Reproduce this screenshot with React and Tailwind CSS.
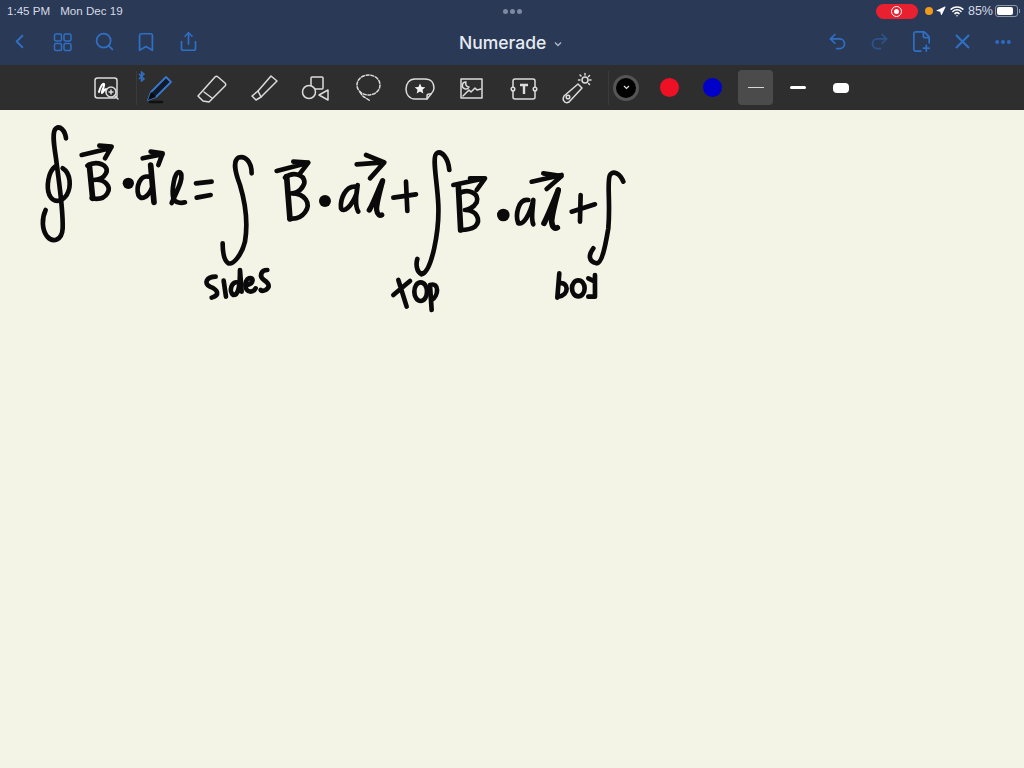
import { ChevronLeft, Search, Bookmark, Share, Undo2, Redo2, FilePlus2, Ellipsis, Navigation, Wifi } from 'lucide-react'

function GridIcon() {
  return (
    <svg width="20" height="20" viewBox="0 0 20 20" fill="none" stroke="currentColor" strokeWidth="1.5">
      <rect x="1.5" y="2" width="7" height="7" rx="1.5" />
      <rect x="11" y="2" width="7" height="7" rx="1.5" />
      <rect x="1.5" y="11.5" width="7" height="7" rx="1.5" />
      <rect x="11" y="11.5" width="7" height="7" rx="1.5" />
    </svg>
  )
}

function StatusBar() {
  return (
    <div className="h-[22px] flex items-center relative text-[11.6px] text-[#d5dbe6] pl-[7px] pr-[4px]">
      <span>1:45 PM</span>
      <span className="ml-[10px]">Mon Dec 19</span>
      <div className="absolute left-[503px] top-[9px] flex gap-[2px]">
        <span className="w-[5px] h-[5px] rounded-full bg-[#7e8aa3]" />
        <span className="w-[5px] h-[5px] rounded-full bg-[#7e8aa3]" />
        <span className="w-[5px] h-[5px] rounded-full bg-[#7e8aa3]" />
      </div>
      <div className="ml-auto flex items-center">
        <div className="w-[42px] h-[15px] rounded-full bg-[#e8202f] flex items-center justify-center">
          <span className="w-[11px] h-[11px] rounded-full border border-white flex items-center justify-center">
            <span className="w-[5px] h-[5px] rounded-full bg-white" />
          </span>
        </div>
        <span className="ml-[7px] w-[8px] h-[8px] rounded-full bg-[#f09a1a]" />
        <Navigation size={10} className="ml-[3px] text-white" fill="currentColor" />
        <Wifi size={14} className="ml-[4px] text-white" strokeWidth={2.6} />
        <span className="ml-[4px] text-[12.5px]">85%</span>
        <div className="ml-[2px] w-[23px] h-[12px] rounded-[3px] border border-[#8d97a8] p-[1px]">
          <div className="h-full w-[85%] rounded-[2px] bg-white" />
        </div>
        <span className="ml-[1px] w-[1px] h-[4px] bg-[#8d97a8]" />
      </div>
    </div>
  )
}

function NavBar() {
  return (
    <div className="h-[43px] pb-[4px] flex items-center text-[#2f6fc4] relative">
      <div className="flex items-center pl-[8px]">
        <ChevronLeft size={23} strokeWidth={2} />
        <div className="ml-[22px]"><GridIcon /></div>
        <Search size={21} strokeWidth={2} className="ml-[21px]" />
        <Bookmark size={22} strokeWidth={1.9} className="ml-[20px]" />
        <Share size={21} strokeWidth={1.9} className="ml-[21px]" />
      </div>
      <div className="absolute left-[459px] top-[8px] flex items-center text-[#e6ebf3] text-[17.5px] font-medium font-['Inter',sans-serif]">
        Numerade
        <svg className="ml-[8px] mt-[2px]" width="8" height="6" viewBox="0 0 8 6" fill="none" stroke="#aeb8c8" strokeWidth="1.4">
          <path d="M1 1.5l3 3 3-3" />
        </svg>
      </div>
      <div className="ml-auto flex items-center pr-[11px]">
        <Undo2 size={21} strokeWidth={2} />
        <Redo2 size={21} strokeWidth={2} className="ml-[21px] opacity-50" />
        <FilePlus2 size={23} strokeWidth={1.8} className="ml-[20px]" />
        <svg className="ml-[21px]" width="17" height="17" viewBox="0 0 17 17" fill="none" stroke="currentColor" strokeWidth="2.2">
          <path d="M2 2l13 13M15 2L2 15" />
        </svg>
        <Ellipsis size={20} strokeWidth={2.6} className="ml-[22px]" />
      </div>
    </div>
  )
}

function ToolIcon({ children }) {
  return (
    <svg width="34" height="34" viewBox="0 0 34 34" fill="none" stroke="#dcdcdc" strokeWidth="1.5" strokeLinejoin="round" strokeLinecap="round">
      {children}
    </svg>
  )
}

const tools = [
  // eraser
  <ToolIcon key="eraser">
    <path d="M20 6c1-1 2-1 3 0l7 6c1 1 1 2 0 3L14 31l-6-1-5-5z" />
    <path d="M9 21l8 6" />
  </ToolIcon>,
  // highlighter
  <ToolIcon key="highlighter">
    <path d="M24 5l6 5-16 16-3-6z" />
    <path d="M11 20l-6 5 4 4 5-3" />
  </ToolIcon>,
  // shapes
  <ToolIcon key="shapes">
    <rect x="12" y="6" width="12" height="12" rx="1" />
    <circle cx="10" cy="21" r="6.5" fill="#2e2e2e" />
    <path d="M29 19v10l-9-5z" />
  </ToolIcon>,
  // lasso
  <ToolIcon key="lasso">
    <g strokeDasharray="3 1.8">
      <ellipse cx="17.5" cy="14" rx="11.5" ry="10" />
      <path d="M9 21c3 6 7 6 10 9" />
    </g>
  </ToolIcon>,
  // sticker
  <ToolIcon key="sticker">
    <path d="M12 8h10c6 0 9 4 9 9 0 3-1 4-3 6l-4 5H12C6 28 3 23 3 18S6 8 12 8z" />
    <path d="M24 28v-3c0-1 1-2 2-2h2" />
    <path d="M17 12.5l1.6 3.4 3.7.4-2.8 2.5.8 3.7-3.3-1.9-3.3 1.9.8-3.7-2.8-2.5 3.7-.4z" fill="#f4f4f4" stroke="none" />
  </ToolIcon>,
  // image
  <ToolIcon key="image">
    <rect x="6" y="8" width="21" height="19" />
    <path d="M8 25l6-6 2 2 4-4 2 2 4-1" />
    <path d="M11 11a3.5 3.5 0 1 0 3 5 3.5 3.5 0 0 1-3-5z" />
  </ToolIcon>,
  // text box
  <ToolIcon key="text">
    <rect x="6" y="8" width="22" height="20" rx="2" />
    <circle cx="6" cy="18" r="1.8" fill="#2e2e2e" />
    <circle cx="28" cy="18" r="1.8" fill="#2e2e2e" />
    <path d="M13 14h8M17 14v9" strokeWidth="2.4" strokeLinecap="butt" />
  </ToolIcon>,
  // laser pointer
  <ToolIcon key="laser">
    <path d="M5 25L19 13l4 4-13 14c-2 1-4 1-5-1-1-1-1-3 0-5z" />
    <circle cx="9" cy="26" r="1.8" />
    <circle cx="26" cy="9" r="3" />
    <path d="M26 2.5v1.5M32 9h-1.5M21 4l1 1M30.5 4.5l-1 1M30.5 13.5l-1-1M19.5 9H21" />
  </ToolIcon>,
]

function Toolbar() {
  return (
    <div className="h-[45px] bg-[#2e2e2e] flex items-center pl-[89px]">
      <ToolIcon>
        <rect x="6" y="7" width="22" height="20" rx="2.5" />
        <path d="M10 21c1-5 4-9 5-8 1 2-3 8-2 9 1 0 2-4 4-4 1 0 0 3 1 3" stroke="#fff" strokeWidth="2" />
        <circle cx="22" cy="21" r="5" fill="#2e2e2e" />
        <path d="M20 21h4M22 19v4M26 25l3 3" />
      </ToolIcon>
      <div className="ml-[13px] w-px h-[34px] bg-[#3a3a3a]" />
      <div className="ml-[5px] w-[34px] h-[34px] relative">
        <svg width="34" height="34" viewBox="0 0 34 34" fill="none">
          <path d="M8 31h12" stroke="#111" strokeWidth="2.5" strokeLinecap="round" />
          <path d="M6 29l3-8 15-15 5 5-15 15z" fill="#111a2b" stroke="#3a78c8" strokeWidth="1.8" strokeLinejoin="round" />
          <path d="M6 29l3-8 5 5z" fill="#0b0b0b" />
        </svg>
        <svg className="absolute left-[-4px] top-0" width="8" height="11" viewBox="0 0 8 11" fill="none" stroke="#2f6fc4" strokeWidth="1.5">
          <path d="M1 3l5 5-2.5 2V1L6 3 1 8" />
        </svg>
      </div>
      <div className="ml-[19px] flex gap-[18px]">
        {tools}
      </div>
      <div className="ml-[15px] w-px h-[34px] bg-[#3a3a3a]" />
      <div className="ml-[4px] w-[26px] h-[26px] rounded-full bg-black border-[3px] border-[#555] flex items-center justify-center">
        <svg width="7" height="5" viewBox="0 0 7 5" fill="none" stroke="#ddd" strokeWidth="1.2"><path d="M1 1l2.5 2.5L6 1" /></svg>
      </div>
      <span className="ml-[21px] w-[19px] h-[19px] rounded-full bg-[#ee1125]" />
      <span className="ml-[24px] w-[19px] h-[19px] rounded-full bg-[#0000c8]" />
      <div className="ml-[16px] w-[35px] h-[35px] rounded-[4px] bg-[#4b4b4b] flex items-center justify-center">
        <span className="w-[16px] h-[1.5px] bg-[#d8d8d8]" />
      </div>
      <span className="ml-[17px] w-[16px] h-[3px] rounded-full bg-white" />
      <span className="ml-[27px] w-[16px] h-[10px] rounded-[4px] bg-white" />
    </div>
  )
}

// handwritten ink, stroke coordinates measured on a 3x crop of the page
function Ink() {
  return (
    <svg className="block" width="1024" height="658" viewBox="0 110 1024 658" fill="none" stroke="#0a0a0a" strokeWidth="14" strokeLinecap="round" strokeLinejoin="round">
      <g transform="translate(30 115) scale(0.3333)">
        {/* contour integral */}
        <path d="M108 70C105 45 90 32 78 40C65 50 72 90 78 130C85 190 100 280 98 340C96 375 70 385 52 365C35 345 35 310 47 285" />
        <path d="M75 155C55 170 48 215 58 240C70 265 95 262 110 240C125 215 122 175 98 160" />
        {/* B */}
        <path d="M178 150L188 250" strokeWidth="17" />
        <path d="M172 152C200 135 240 150 228 175C218 195 195 195 190 195C225 190 245 215 232 235C220 255 195 252 185 250" />
        <path d="M155 120L240 100M208 92L245 95L225 130" />
        <circle cx="295" cy="205" r="17" fill="#0a0a0a" stroke="none" />
        {/* d */}
        <path d="M355 185C330 180 318 215 325 240C335 258 355 245 365 220" />
        <path d="M362 150L372 262" strokeWidth="17" />
        <path d="M338 130L398 118M362 110L398 115L385 150" />
        {/* l */}
        <path d="M425 264C440 230 465 185 450 172C432 165 425 230 430 250C435 265 455 265 465 262" />
        {/* = */}
        <path d="M498 205L545 200M500 248L542 240" />
        {/* integral */}
        <path d="M665 175C665 140 645 120 625 128C608 140 615 170 630 210C645 260 655 320 645 380C635 420 610 450 595 445C580 435 578 410 578 385" />
        {/* B */}
        <path d="M770 185L780 312" strokeWidth="17" />
        <path d="M765 188C795 165 835 185 820 212C810 232 790 235 785 235C825 235 845 265 825 292C810 312 790 312 778 310" />
        <path d="M740 168L835 143M790 140L835 143L808 178" />
        <circle cx="885" cy="258" r="18" fill="#0a0a0a" stroke="none" />
        {/* sides */}
        <path d="M557 485C530 485 520 505 540 515C565 525 570 540 545 548" />
        <path d="M581 497L588 545" />
        <path d="M625 503C605 495 595 530 610 540C625 540 630 520 630 465L635 530" />
        <path d="M652 510C672 505 672 485 657 490C642 495 642 530 662 530C672 530 677 520 677 520" />
        <path d="M712 465C692 465 687 485 702 495C717 505 722 515 707 525C697 530 692 525 692 525" />
      </g>
      <g transform="translate(330 115) scale(0.3333)">
        {/* dl */}
        <path d="M80 215C45 210 30 255 33 280C40 295 65 275 80 235L83 210C77 245 75 275 85 290" />
        <path d="M80 148L160 142M108 120L163 142L120 190" />
        <path d="M118 285C128 270 145 225 158 197C148 235 138 270 140 285C142 300 150 303 155 300" strokeWidth="16" />
        {/* + */}
        <path d="M190 248L258 238M228 200L232 288" />
        {/* integral */}
        <path d="M358 165C355 130 335 105 320 115C305 125 322 200 325 270C328 350 305 470 275 478C258 470 258 445 262 432" />
        {/* B */}
        <path d="M385 210L392 345" strokeWidth="17" />
        <path d="M388 235C415 220 450 235 440 262C430 280 410 285 405 285C440 285 455 315 435 335C420 345 405 345 392 345" />
        <path d="M370 210L465 190M420 190L465 190L440 225" />
        <circle cx="520" cy="300" r="19" fill="#0a0a0a" stroke="none" />
        {/* dl */}
        <path d="M595 255C565 250 555 300 565 325C580 330 600 300 610 255C608 290 602 310 610 328" />
        <path d="M605 200L695 180M640 175L695 183L650 222" />
        <path d="M642 325C655 300 675 250 685 225C675 265 665 300 665 320C667 338 675 342 682 338" strokeWidth="17" />
        {/* + */}
        <path d="M725 290L795 268M752 240L750 320" />
        {/* integral */}
        <path d="M880 200C870 175 850 165 840 180C830 200 842 260 835 340C825 400 815 445 800 445C775 440 775 420 790 400" />
        {/* top */}
        <path d="M205 495L230 575M190 540L240 498" />
        <ellipse cx="272" cy="530" rx="19" ry="28" />
        <path d="M300 510L305 585M300 510C330 500 325 545 305 555" />
        {/* bot */}
        <path d="M688 475L682 548M690 505C715 500 720 540 685 545" />
        <ellipse cx="745" cy="520" rx="19" ry="24" />
        <path d="M775 490L795 500M795 480L795 545M775 545L795 545" />
      </g>
    </svg>
  )
}

export default function App() {
  return (
    <div className="w-[1024px] h-[768px] overflow-hidden flex flex-col bg-[#f4f4e6] font-['Liberation_Sans',sans-serif]">
      <div className="bg-[#2a3955]">
        <StatusBar />
        <NavBar />
      </div>
      <Toolbar />
      <Ink />
    </div>
  )
}
